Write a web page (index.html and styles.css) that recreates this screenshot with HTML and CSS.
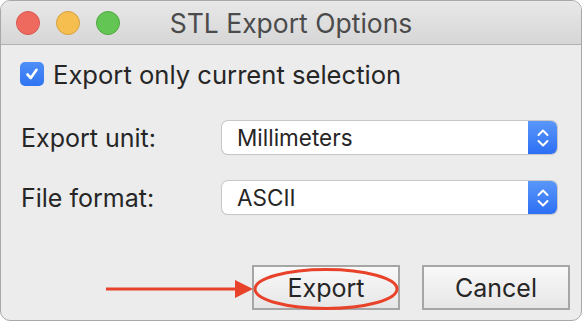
FILE: index.html
```html
<!DOCTYPE html>
<html lang="en">
<head>
    <meta charset="UTF-8">
    <meta name="viewport" content="width=device-width, initial-scale=1.0">
    <title>STL Export Options</title>
    <link rel="stylesheet" href="styles.css">
</head>
<body>
    <div class="window">
        <div class="titlebar">
            <div class="lights">
                <span class="light red"></span>
                <span class="light yellow"></span>
                <span class="light green"></span>
            </div>
            <div class="title">STL Export Options</div>
        </div>

        <div class="content">
            <label class="check-row">
                <span class="checkbox">
                    <svg width="16" height="16" viewBox="0 0 16 16"><path d="M3.5 8.5 L6.8 12 L12.5 3.8" fill="none" stroke="#fff" stroke-width="2.6" stroke-linecap="round" stroke-linejoin="round"/></svg>
                </span>
                Export only current selection
            </label>

            <div class="field-row">
                <span class="field-label">Export unit:</span>
                <div class="select">
                    <span class="select-value">Millimeters</span>
                    <span class="stepper">
                        <svg width="14" height="22" viewBox="0 0 14 22"><path d="M2.5 8 L7 3.5 L11.5 8 M2.5 14 L7 18.5 L11.5 14" fill="none" stroke="#fff" stroke-width="2" stroke-linecap="round" stroke-linejoin="round"/></svg>
                    </span>
                </div>
            </div>

            <div class="field-row">
                <span class="field-label">File format:</span>
                <div class="select">
                    <span class="select-value">ASCII</span>
                    <span class="stepper">
                        <svg width="14" height="22" viewBox="0 0 14 22"><path d="M2.5 8 L7 3.5 L11.5 8 M2.5 14 L7 18.5 L11.5 14" fill="none" stroke="#fff" stroke-width="2" stroke-linecap="round" stroke-linejoin="round"/></svg>
                    </span>
                </div>
            </div>

            <div class="buttons">
                <button class="btn">Export</button>
                <button class="btn">Cancel</button>
            </div>
        </div>

        <!-- red annotation drawn over the dialog -->
        <svg class="annotation" width="582" height="322" viewBox="0 0 582 322">
            <line x1="106" y1="289" x2="238" y2="289" stroke="#e8432a" stroke-width="3"/>
            <path d="M235 280 L253 289 L235 298 Z" fill="#e8432a"/>
            <ellipse cx="326" cy="289" rx="71" ry="19.5" fill="none" stroke="#e8432a" stroke-width="3"/>
        </svg>
    </div>
</body>
</html>
```

FILE: styles.css
```css
body {
    margin: 0;
    background: #fff;
    font-family: Inter, "Liberation Sans", sans-serif;
}
.window {
    position: relative;
    width: 580px;
    height: 319px;
    border: 1px solid #a8a8a8;
    border-radius: 10px;
    background: #ececec;
    overflow: hidden;
}
.titlebar {
    display: grid;
    grid-template-columns: 1fr auto 1fr;
    align-items: center;
    height: 43px;
    border-bottom: 1px solid #b1b1b1;
    background: linear-gradient(#e8e8e8, #d6d6d6);
}
.lights {
    display: flex;
    gap: 16px;
    padding-left: 15px;
}
.light {
    width: 22px;
    height: 22px;
    border-radius: 50%;
    border: 1px solid rgba(0, 0, 0, 0.12);
}
.red { background: #ee6a5f; border-color: #d7574c; }
.yellow { background: #f5be4f; border-color: #d9a13c; }
.green { background: #62c554; border-color: #4fa840; }
.title {
    font-size: 26.5px;
    color: #4b4b4b;
    padding-top: 1px;
}
.content {
    padding: 16px 11px 0 19px;
}
.check-row {
    display: flex;
    align-items: center;
    gap: 9px;
    font-size: 25.6px;
    color: #262626;
    height: 26px;
}
.checkbox {
    display: flex;
    align-items: center;
    justify-content: center;
    width: 24px;
    height: 24px;
    border-radius: 5px;
    background: linear-gradient(#4f8ff8, #2f74f2);
}
.field-row {
    display: grid;
    grid-template-columns: 202px 335px;
    align-items: center;
    margin-top: 34px;
    font-size: 25px;
    color: #262626;
}
.field-row + .field-row {
    margin-top: 27px;
}
.field-label {
    padding-left: 1px;
}
.select {
    display: flex;
    height: 33px;
    border-radius: 6px;
    background: #fff;
    box-shadow: 0 0 0 1px #c8c8c8, 0 1px 1px rgba(0, 0, 0, 0.15);
    overflow: hidden;
}
.select-value {
    flex: 1;
    padding-left: 15px;
    font-size: 22.5px;
    line-height: 33px;
}
.stepper {
    display: flex;
    align-items: center;
    justify-content: center;
    width: 29px;
    background: linear-gradient(#5a97f9, #2d6ff5);
}
.buttons {
    display: flex;
    justify-content: flex-end;
    gap: 22px;
    margin-top: 51px;
}
.btn {
    width: 148px;
    height: 45px;
    border: 2px solid #a6a6a6;
    background: linear-gradient(#f9f9f9, #e6e6e6);
    font-family: inherit;
    font-size: 25px;
    color: #262626;
    padding: 0;
}
.annotation {
    position: absolute;
    left: -1px;
    top: -1px;
    pointer-events: none;
}
```
